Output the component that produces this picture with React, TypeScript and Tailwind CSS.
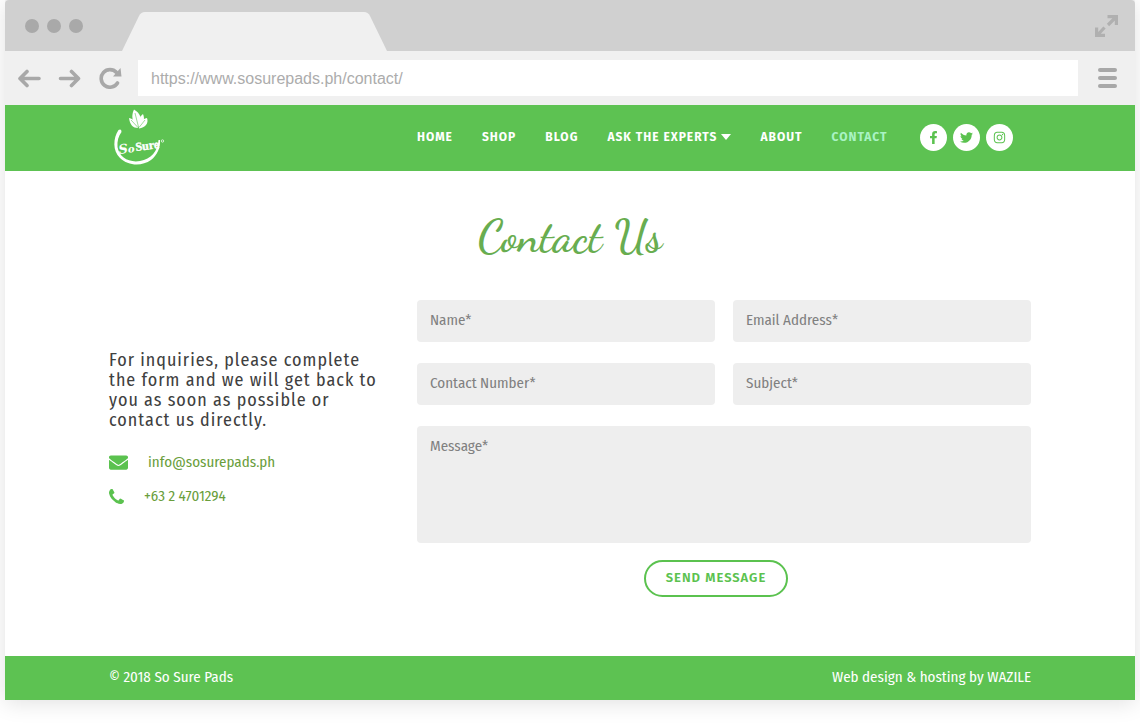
import { FaEnvelope, FaFacebookF, FaInstagram, FaTwitter } from "react-icons/fa";

const links = ["HOME", "SHOP", "BLOG", "ASK THE EXPERTS", "ABOUT", "CONTACT"];

const socials = [
  { label: "Facebook", Icon: FaFacebookF },
  { label: "Twitter", Icon: FaTwitter },
  { label: "Instagram", Icon: FaInstagram },
];

const fields = [
  { id: "name", label: "Name*", type: "text" },
  { id: "email", label: "Email Address*", type: "email" },
  { id: "phone", label: "Contact Number*", type: "tel" },
  { id: "subject", label: "Subject*", type: "text" },
];

const fieldClass =
  "block w-full rounded bg-[#eeeeee] px-[13px] text-[15px] text-[#555] placeholder:text-[#808080] placeholder:opacity-100 outline-none focus:ring-1 focus:ring-[#5bc24f]";

function BrowserBar() {
  return (
    <div className="bg-[#f0f0f0]">
      <div className="flex h-[51px] items-end justify-between rounded-t bg-[#d0d0d0] pr-[17px] pl-5">
        <div className="flex items-end">
          <div className="flex gap-2 pb-[18px]">
            <span className="size-3.5 rounded-full bg-[#a9a9a9]" />
            <span className="size-3.5 rounded-full bg-[#a9a9a9]" />
            <span className="size-3.5 rounded-full bg-[#a9a9a9]" />
          </div>
          <svg className="ml-[39px] h-[39px] w-[265px]" viewBox="0 0 265 39" aria-hidden="true">
            <path d="M0 39 17 4Q19 0 23 0H242Q246 0 248 4L265 39Z" fill="#f0f0f0" />
          </svg>
        </div>
        <button type="button" aria-label="Full screen" className="mb-[13px]">
          <svg className="size-[24px]" viewBox="0 0 24 24" fill="none" stroke="#b0b0b0" strokeWidth="3.2" aria-hidden="true">
            <path d="M13.500 2.600H22.400V11M22 3 14 11M2.600 13.500V21.400H11M3.500 21 10.500 13.500" strokeLinejoin="miter" />
          </svg>
        </button>
      </div>
      <div className="flex h-[54px] items-center pr-[18px] pl-3">
        <button type="button" aria-label="Back">
          <svg className="h-5 w-6" viewBox="0 0 24 20" fill="none" stroke="#a8a8a8" strokeWidth="3.6" strokeLinecap="round" strokeLinejoin="round" aria-hidden="true">
            <path d="M22 10.500H4M10 3.500 3 10.500 10 17.500" />
          </svg>
        </button>
        <button type="button" aria-label="Forward" className="ml-[17px]">
          <svg className="h-5 w-6" viewBox="0 0 24 20" fill="none" stroke="#a8a8a8" strokeWidth="3.6" strokeLinecap="round" strokeLinejoin="round" aria-hidden="true">
            <path d="M2.500 10.500H20M13.500 3.500 20.500 10.500 13.500 17.500" />
          </svg>
        </button>
        <button type="button" aria-label="Reload" className="ml-[17px]">
          <svg className="h-[22px] w-[23px]" viewBox="0 0 23 22" fill="none" aria-hidden="true">
            <path d="M18.500 16A8.800 8.800 0 1 1 17.500 5.500" stroke="#a8a8a8" strokeWidth="3.6" strokeLinecap="round" />
            <path d="M21.500 1 22.500 9.500H14Z" fill="#a8a8a8" />
          </svg>
        </button>
        <input
          aria-label="Address"
          defaultValue="https://www.sosurepads.ph/contact/"
          className="ml-4 h-9 min-w-0 flex-1 bg-white px-[13px] pt-0.5 font-['Liberation_Sans',sans-serif] text-[16px] text-[#acacac] outline-none"
        />
        <button type="button" aria-label="Menu" className="ml-5 flex flex-col gap-1">
          <span className="h-1 w-[19px] rounded-full bg-[#a8a8a8]" />
          <span className="h-1 w-[19px] rounded-full bg-[#a8a8a8]" />
          <span className="h-1 w-[19px] rounded-full bg-[#a8a8a8]" />
        </button>
      </div>
    </div>
  );
}

function Logo() {
  return (
    <svg className="h-[60px] w-[56px]" viewBox="0 0 56 60" role="img" aria-label="So Sure">
      <g fill="#fff">
        <path d="M25 1.500C31 5 34 11 31 19H28C23 13 22 8 25 1.500Z" />
        <path d="M34 6C36 11 35 16 30 20C29 14 30 9 34 6Z" />
        <path d="M20 10C25 11 28 14 29 20C24 20 21 17 20 10Z" />
        <path d="M38 10C40 15 36 20 30 20.500C29 15 33 11 38 10Z" />
      </g>
      <path d="M26 5 29.500 19M22 12 29 19.500M36 12 30 19.500" stroke="#5dc252" strokeWidth="0.600" fill="none" />
      <path
        d="M9.500 22C4 30 3.500 43 11 50C19 58 33 58.500 42 52C48 47.500 51.500 40 51 32H49.500C49 43 42 51 31 53C20 55 10 49 8.500 39C8 33 9.500 28 12.500 24Q12.500 20.500 9.500 22Z"
        fill="#fff"
      />
      <text
        x="10"
        y="46"
        transform="rotate(-7 10 46)"
        fill="#fff"
        fontFamily="DejaVu Serif, serif"
        fontSize="11"
        fontWeight="700"
        fontStyle="italic"
      >
        <tspan fontSize="13">S</tspan>
        <tspan fontSize="10">o</tspan>
      </text>
      <text
        x="27"
        y="43"
        transform="rotate(-7 27 43)"
        fill="#fff"
        fontFamily="Liberation Serif, serif"
        fontSize="12"
        fontWeight="700"
        stroke="#fff"
        strokeWidth="0.400"
      >
        Sure
      </text>
      <circle cx="53.500" cy="33" r="1.200" fill="none" stroke="#fff" strokeWidth="0.700" />
    </svg>
  );
}

function PhoneIcon() {
  return (
    <svg className="size-[15px]" viewBox="0 128 1408 1408" fill="#5bc24f" aria-hidden="true">
      <path d="M1408 1240q0 27-10 70.500t-21 68.500q-21 50-122 106-94 51-186 51-27 0-53-3.500t-57-12.500-47-14.500-55.500-20.500-49-18q-98-35-175-83-127-79-264-216t-216-264q-48-77-83-175-3-9-18-49t-20.500-55.500-14.500-47-12.500-57-3.500-53q0-92 51-186 56-101 106-122 25-11 68.500-21t70.500-10q14 0 21 3 18 6 53 76 11 19 30 54t35 63.500 31 53.500q3 4 17.500 25t21.500 35.500 7 28.500q0 20-28.500 50t-62 55-62 53-28.500 46q0 9 5 22.500t8.500 20.500 14 24 11.500 19q76 137 174 235t235 174q2 1 19 11.500t24 14 20.500 8.500 22.500 5q18 0 46-28.500t53-62 55-62 50-28.500q14 0 28.500 7t35.500 21.500 25 17.500q25 15 53.500 31t63.500 35 54 30q70 35 76 53 3 7 3 21z" />
    </svg>
  );
}

export default function App() {
  return (
    <div className="min-h-screen bg-white px-[5px] pb-[26px] font-['Fira_Sans_Condensed','Fira_Sans','Noto_Sans',sans-serif]">
      <div className="rounded-t bg-white shadow-[0_3px_22px_rgba(0,0,0,0.12)]">
        <BrowserBar />

        <header className="bg-[#5dc252]">
          <div className="mx-auto grid h-[66px] max-w-[922px] grid-cols-[308px_1fr] items-center">
            <a href="#home">
              <Logo />
            </a>
            <div className="flex items-center pb-0.5">
              <nav className="flex gap-[29px] font-['Fira_Sans','Noto_Sans',sans-serif] text-[12px] font-bold tracking-[1px] whitespace-nowrap">
                {links.map((link) => (
                  <a
                    key={link}
                    href="#"
                    className={link === "CONTACT" ? "text-[#a9f3c4]" : "flex items-center gap-1 text-white"}
                  >
                    {link}
                    {link === "ASK THE EXPERTS" && (
                      <svg className="h-[6px] w-[10px]" viewBox="0 0 10 6" aria-hidden="true">
                        <path d="M0 0H10L5 6Z" fill="#fff" />
                      </svg>
                    )}
                  </a>
                ))}
              </nav>
              <div className="ml-8 flex gap-1.5">
                {socials.map(({ label, Icon }) => (
                  <a
                    key={label}
                    href="#"
                    aria-label={label}
                    className="flex size-[27px] items-center justify-center rounded-full bg-white text-[13px] text-[#5bc24f]"
                  >
                    <Icon />
                  </a>
                ))}
              </div>
            </div>
          </div>
        </header>

        <main className="mx-auto max-w-[922px] pt-9 pb-[59px]">
          <h1 className="text-center font-['Dancing_Script','Liberation_Serif',serif] text-[46px] leading-[60px] font-semibold text-[#68ad50]">
            Contact Us
          </h1>
          <div className="mt-[33px] grid grid-cols-[308px_1fr]">
            <section className="pt-[50px]">
              <p className="text-[18px] leading-5 tracking-[1px] text-[#404040]">
                For inquiries, please complete
                <br />
                the form and we will get back to
                <br />
                you as soon as possible or
                <br />
                contact us directly.
              </p>
              <div className="mt-5 flex flex-col gap-2.5 text-[15px] leading-6 text-[#6a9e3c]">
                <a href="mailto:info@sosurepads.ph" className="flex items-center gap-5">
                  <FaEnvelope className="size-[19px] text-[#5bc24f]" />
                  info@sosurepads.ph
                </a>
                <a href="tel:+6324701294" className="flex items-center gap-5">
                  <PhoneIcon />
                  +63 2 4701294
                </a>
              </div>
            </section>
            <form onSubmit={(e) => e.preventDefault()}>
              <div className="grid grid-cols-2 gap-x-[18px] gap-y-[21px]">
                {fields.map((f) => (
                  <input
                    key={f.id}
                    id={f.id}
                    type={f.type}
                    aria-label={f.label}
                    placeholder={f.label}
                    className={`${fieldClass} h-[42px] pb-0.5`}
                  />
                ))}
                <textarea
                  id="message"
                  aria-label="Message*"
                  placeholder="Message*"
                  className={`${fieldClass} col-span-2 h-[117px] resize-none py-[9px]`}
                />
              </div>
              <div className="mt-[17px] flex justify-center pr-4">
                <button
                  type="submit"
                  className="h-[37px] rounded-full border-2 border-[#5bc24f] px-5 pb-0.5 font-['Fira_Sans','Noto_Sans',sans-serif] text-[13px] font-semibold tracking-[1px] text-[#5bc24f]"
                >
                  SEND MESSAGE
                </button>
              </div>
            </form>
          </div>
        </main>

        <footer className="bg-[#5dc252]">
          <div className="mx-auto flex h-11 max-w-[922px] items-center justify-between pb-0.5 text-[15px] text-white">
            <p>© 2018 So Sure Pads</p>
            <p>
              Web design &amp; hosting by <a href="#">WAZILE</a>
            </p>
          </div>
        </footer>
      </div>
    </div>
  );
}
